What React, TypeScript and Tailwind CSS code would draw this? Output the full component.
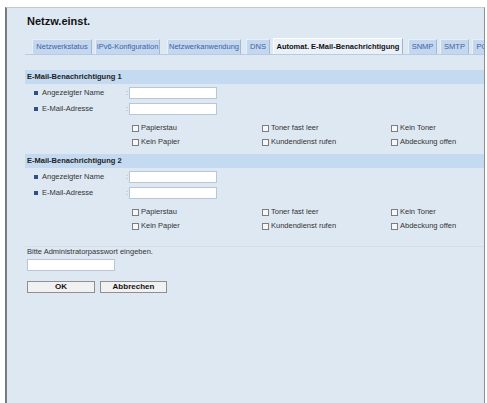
import React from "react";

const font = { fontFamily: '"Liberation Sans", Arial, sans-serif' };

function Tab({ label, w, ml, active }: { label: string; w: string; ml: string; active?: boolean }) {
  if (active) {
    return (
      <div
        className={`${w} ${ml} h-[16px] shrink-0 flex items-center justify-center bg-[#eaf0f7] border border-b-0 border-l-[#ffffff] border-t-[#ffffff] border-r-[#9fb3cc] text-[7.5px] font-bold text-[#111] whitespace-nowrap`}
      >
        {label}
      </div>
    );
  }
  return (
    <div
      className={`${w} ${ml} h-[15px] shrink-0 flex items-center justify-center bg-[#c3d7ee] border border-b-0 border-l-[#e8eff8] border-t-[#e8eff8] border-r-[#a3b8d2] text-[7.5px] text-[#3d63a6] whitespace-nowrap overflow-hidden`}
    >
      {label}
    </div>
  );
}

function Field({ label }: { label: string }) {
  return (
    <div className="h-[16px] flex items-center">
      <div className="w-[101px] flex items-center pl-[9px]">
        <span className="w-[4px] h-[4px] bg-[#2f4f86] mr-[4px]" />
        <span className="text-[7.5px] text-[#333]">{label}</span>
      </div>
      <span className="w-[3px] text-[7.5px] text-[#999]">:</span>
      <div className="w-[88px] h-[12px] bg-white border border-[#b9c6d6]" />
    </div>
  );
}

function Check({ label }: { label: string }) {
  return (
    <div className="flex items-center">
      <span className="w-[7px] h-[7px] border border-[#7d7d7d] bg-[#f4f7fb] mr-[2px]" />
      <span className="text-[7.5px] text-[#333] whitespace-nowrap">{label}</span>
    </div>
  );
}

function Section({ title, mt }: { title: string; mt: string }) {
  return (
    <div className={mt}>
      <div className="h-[14px] bg-[#c3daf0] flex items-center pl-[2px] text-[7.5px] font-bold text-[#222]">
        {title}
      </div>
      <div className="pt-[1px]">
        <Field label="Angezeigter Name" />
        <Field label="E-Mail-Adresse" />
      </div>
      <div className="mt-[4px] ml-[107px] grid grid-cols-[130px_129px_1fr]">
        <div className="h-[14px] flex items-center"><Check label="Papierstau" /></div>
        <div className="h-[14px] flex items-center"><Check label="Toner fast leer" /></div>
        <div className="h-[14px] flex items-center"><Check label="Kein Toner" /></div>
        <div className="h-[14px] flex items-center"><Check label="Kein Papier" /></div>
        <div className="h-[14px] flex items-center"><Check label="Kundendienst rufen" /></div>
        <div className="h-[14px] flex items-center"><Check label="Abdeckung offen" /></div>
      </div>
    </div>
  );
}

export default function App() {
  return (
    <div className="min-h-[403px] bg-white pt-[7px] pl-[5px] pr-[2px]" style={font}>
      <div className="h-[396px] bg-[#dee8f3] border-l-2 border-l-[#7b7b7b] border-t border-t-[#c9c9c9] border-r border-r-[#8f8f8f] pl-[18px] overflow-hidden">
        <div className="pt-[6px] pl-[2px] h-[20px] leading-[14px] text-[11px] font-bold text-[#111]">
          Netzw.einst.
        </div>
        <div className="mt-[10px] flex items-end border-b border-[#b9cbe0] overflow-hidden">
          <Tab label="Netzwerkstatus" w="w-[60px]" ml="ml-[7px]" />
          <Tab label="IPv6-Konfiguration" w="w-[65px]" ml="ml-[3px]" />
          <Tab label="Netzwerkanwendung" w="w-[74px]" ml="ml-[7px]" />
          <Tab label="DNS" w="w-[24px]" ml="ml-[5px]" />
          <Tab label="Automat. E-Mail-Benachrichtigung" w="w-[130px]" ml="ml-[3px]" active />
          <Tab label="SNMP" w="w-[29px]" ml="ml-[5px]" />
          <Tab label="SMTP" w="w-[29px]" ml="ml-[3px]" />
          <Tab label="POP3" w="w-[29px]" ml="ml-[3px]" />
        </div>
        <Section title="E-Mail-Benachrichtigung 1" mt="mt-[15px]" />
        <Section title="E-Mail-Benachrichtigung 2" mt="mt-[5px]" />
        <div className="mt-[13px] h-px bg-[#d4deea]" />
        <div className="pl-[2px]">
          <div className="h-[10px] leading-[10px] text-[7.5px] text-[#333]">
            Bitte Administratorpasswort eingeben.
          </div>
          <div className="mt-[2px] w-[88px] h-[12px] bg-white border border-[#b9c6d6]" />
          <div className="mt-[10px] flex">
            <button className="w-[68px] h-[12px] bg-[#f1f1f1] border border-[#8f8f8f] text-[8px] font-bold text-[#111] leading-[10px]">
              OK
            </button>
            <button className="ml-[5px] w-[67px] h-[12px] bg-[#f1f1f1] border border-[#8f8f8f] text-[8px] font-bold text-[#111] leading-[10px]">
              Abbrechen
            </button>
          </div>
        </div>
      </div>
    </div>
  );
}
